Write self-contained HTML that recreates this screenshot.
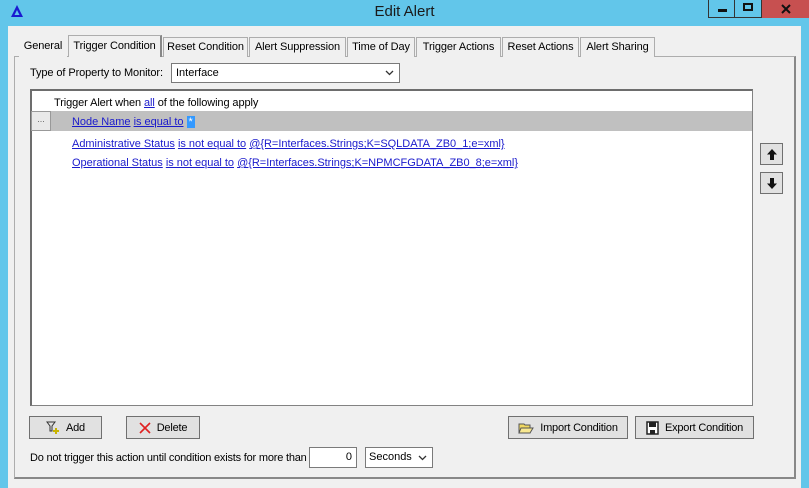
<!DOCTYPE html>
<html><head><style>
*{box-sizing:border-box;margin:0;padding:0}
body{width:809px;height:488px;background:#62c6ea;font-family:"Liberation Sans",sans-serif;font-size:11px;color:#000;position:relative;overflow:hidden}
.a{position:absolute}
.title{left:0;top:3px;width:809px;text-align:center;font-size:15px;color:#1a1a1a}
.body{left:8px;top:26px;width:793px;height:462px;background:#f0f0f0}
.tab{position:absolute;top:37px;height:20px;border:1px solid #adadad;border-bottom:none;background:#f0f0f0;padding-top:3px;font-size:11px;white-space:nowrap;text-align:center;letter-spacing:-0.1px}
.panel{left:14px;top:56px;width:782px;height:423px;border:1px solid #adadad;border-right:2px solid #888;border-bottom:2px solid #888;background:#f0f0f0}
.btn{position:absolute;height:23px;border:1px solid #707070;background:#e1e1e1;font-size:11px;display:flex;align-items:center;justify-content:center;gap:6px;letter-spacing:-0.2px}
a{color:#1a1acc;text-decoration:underline}
.row{position:absolute;left:72px;font-size:11px;white-space:nowrap;letter-spacing:-0.02px}
</style></head><body>
<svg class="a" style="left:10px;top:4px" width="14" height="14" viewBox="0 0 14 14"><path d="M7 1L13 13H1Z" fill="#1a1ad0"/><path d="M7 6L9.5 11H4.5Z" fill="#62c6ea"/></svg>
<div class="a title">Edit Alert</div>
<div class="a" style="left:708px;top:0;width:27px;height:18px;border:1px solid #333;border-top:none;background:#62c6ea"><div class="a" style="left:9px;top:9px;width:9px;height:3px;background:#111"></div></div>
<div class="a" style="left:735px;top:0;width:27px;height:18px;border:1px solid #333;border-top:none;border-left:none;background:#62c6ea"><div class="a" style="left:8px;top:3px;width:10px;height:8px;border:2px solid #111"></div></div>
<div class="a" style="left:762px;top:0;width:47px;height:18px;background:#c75050"><svg class="a" style="left:19px;top:4px" width="10" height="10"><path d="M1 1L9 9M9 1L1 9" stroke="#111" stroke-width="2"/></svg></div>
<div class="a body"></div>
<div class="a panel"></div>
<div class="tab" style="left:19px;width:48px;border:none">General</div>
<div class="tab" style="left:68px;width:94px;top:35px;height:22px;border-right:2px solid #888;padding-top:4px">Trigger Condition</div>
<div class="tab" style="left:163px;width:85px">Reset Condition</div>
<div class="tab" style="left:249px;width:97px">Alert Suppression</div>
<div class="tab" style="left:347px;width:68px">Time of Day</div>
<div class="tab" style="left:416px;width:85px">Trigger Actions</div>
<div class="tab" style="left:502px;width:77px">Reset Actions</div>
<div class="tab" style="left:580px;width:75px">Alert Sharing</div>
<div class="a" style="left:30px;top:67px;letter-spacing:-0.1px">Type of Property to Monitor:</div>
<div class="a" style="left:171px;top:63px;width:229px;height:20px;background:#fff;border:1px solid #7a7a7a;padding:3px 4px">Interface<svg class="a" style="right:5px;top:6px" width="9" height="6"><path d="M1 1L4.5 4.5L8 1" stroke="#333" fill="none" stroke-width="1.3"/></svg></div>
<div class="a" style="left:30px;top:89px;width:723px;height:317px;background:#fff;border:1px solid #828282;border-top:2px solid #6d6d6d;border-left:2px solid #6d6d6d"></div>
<div class="a" style="left:54px;top:97px;letter-spacing:-0.1px">Trigger Alert when <a>all</a> of the following apply</div>
<div class="a" style="left:50px;top:111px;width:702px;height:20px;background:#c0c0c0"></div>
<div class="a" style="left:31px;top:111px;width:20px;height:20px;background:#e9e9e9;border:1px solid #999;font-size:9px;text-align:center;line-height:14px;color:#666">...</div>
<div class="row" style="top:116px"><a>Node Name</a> <a>is equal to</a> <span style="background:#3399ff;color:#fff;padding:0 2px">*</span></div>
<div class="row" style="top:138px"><a>Administrative Status</a> <a>is not equal to</a> <a>@{R=Interfaces.Strings;K=SQLDATA_ZB0_1;e=xml}</a></div>
<div class="row" style="top:157px"><a>Operational Status</a> <a>is not equal to</a> <a>@{R=Interfaces.Strings;K=NPMCFGDATA_ZB0_8;e=xml}</a></div>
<div class="btn" style="left:760px;top:143px;width:23px;height:22px"><svg width="12" height="13"><path d="M6 1L11 6.5H8V12H4V6.5H1Z" fill="#111"/></svg></div>
<div class="btn" style="left:760px;top:172px;width:23px;height:22px"><svg width="12" height="13"><path d="M6 12L11 6.5H8V1H4V6.5H1Z" fill="#111"/></svg></div>
<div class="btn" style="left:29px;top:416px;width:73px"><svg width="14" height="14"><path d="M1 1H9L6 5V10H4V5Z" fill="none" stroke="#333"/><path d="M10 7V13M7 10H13" stroke="#c8b400" stroke-width="2"/></svg>Add</div>
<div class="btn" style="left:126px;top:416px;width:74px"><svg width="12" height="12"><path d="M1 1L11 11M11 1L1 11" stroke="#e02020" stroke-width="1.6"/></svg>Delete</div>
<div class="btn" style="left:508px;top:416px;width:120px"><svg width="16" height="13"><path d="M1 3H6L7 4H12V12H1Z" fill="#f0d860" stroke="#555"/><path d="M3 7H15L12 12H1Z" fill="#f8e890" stroke="#555"/></svg>Import Condition</div>
<div class="btn" style="left:635px;top:416px;width:119px"><svg width="13" height="14"><rect x="1" y="1" width="11" height="12" fill="#fff" stroke="#222" stroke-width="1.5"/><rect x="3" y="1" width="7" height="5" fill="#222"/><rect x="4" y="9" width="5" height="4" fill="#222"/></svg>Export Condition</div>
<div class="a" style="left:30px;top:452px;letter-spacing:-0.2px;white-space:nowrap">Do not trigger this action until condition exists for more than</div>
<div class="a" style="left:309px;top:447px;width:48px;height:21px;background:#fff;border:1px solid #7a7a7a;text-align:right;padding:3px 4px">0</div>
<div class="a" style="left:365px;top:447px;width:68px;height:21px;background:#fff;border:1px solid #7a7a7a;padding:3px 3px">Seconds<svg class="a" style="right:5px;top:7px" width="9" height="6"><path d="M1 1L4.5 4.5L8 1" stroke="#333" fill="none" stroke-width="1.3"/></svg></div>
</body></html>
